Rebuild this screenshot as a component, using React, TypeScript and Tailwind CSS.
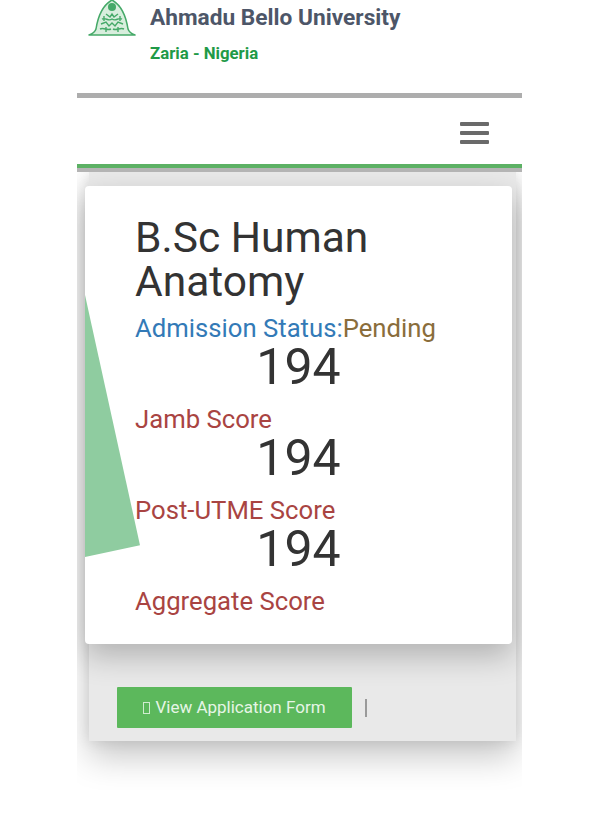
export default function App() {
  return (
    <div className="min-h-[826px] bg-white font-['Roboto',sans-serif] overflow-hidden">
      <div className="ml-[77px] w-[445px]">
        {/* header */}
        <div className="h-[98px] border-b-[5px] border-[#adadad] flex items-start pl-[11px]">
          <svg viewBox="0 0 48 38" className="w-[48px] h-[38px] mt-[-1px] shrink-0">
            <path d="M24 1 C33 6 38 17 40 30 C41 33 44 35 47 36 L1 36 C4 35 7 33 8 30 C10 17 15 6 24 1 Z" fill="#d8eedd" stroke="#45a968" strokeWidth="1.5" strokeLinejoin="round" />
            <circle cx="24" cy="8" r="4" fill="#45a968" />
            <path d="M18 15 L22 18 L24 15 L26 18 L30 15 M14 20 C18 18 20 23 24 20 C28 23 30 18 34 20 M13 25 L18 23 L21 27 L24 24 L27 27 L30 23 L35 25 M12 30 C16 28 19 32 23 30 M25 30 C29 32 32 28 36 30 M16 17 V22 M32 17 V22 M18 28 V33 M30 28 V33" fill="none" stroke="#45a968" strokeWidth="1.4" />
          </svg>
          <div className="ml-[14px]">
            <div className="text-[22.7px] leading-[25px] mt-[5px] font-bold text-[#4d5668]">Ahmadu Bello University</div>
            <div className="text-[16.8px] leading-[20px] mt-[13px] font-bold text-[#1f9a47]">Zaria - Nigeria</div>
          </div>
        </div>
        {/* nav */}
        <div className="h-[70px] border-b-[4px] border-[#5cb164] flex justify-end items-center pr-[33px] pt-[4px]">
          <div className="flex flex-col gap-[5px] w-[29px]">
            <div className="h-[4px] bg-[#6a6a6a] rounded-[1px]" />
            <div className="h-[4px] bg-[#6a6a6a] rounded-[1px]" />
            <div className="h-[4px] bg-[#6a6a6a] rounded-[1px]" />
          </div>
        </div>
        {/* content */}
        <div className="overflow-hidden h-[622px] pl-[12px] pr-[6px] border-t-[4px] border-[#b4b4b4]">
          <div className="h-[569px] bg-[#e9e9e9] pt-[14px] shadow-[0_16px_32px_rgba(0,0,0,0.22),0_0_14px_rgba(0,0,0,0.1)]">
            <div className="relative ml-[-4px] w-[427px] h-[458px] bg-white rounded-[4px] pl-[50px] pt-[30px] shadow-[0_12px_30px_rgba(0,0,0,0.24)]">
              <div className="absolute left-0 top-[109px] w-[55px] h-[262px] bg-[#8fcca0] [clip-path:polygon(0_0,100%_95.5%,0_100%)]" />
              <div className="relative">
                <h1 className="text-[42.5px] leading-[43.5px] text-[#333333]">B.Sc Human Anatomy</h1>
                <div className="text-[25.7px] leading-[30px] mt-[10px]">
                  <span className="text-[#337ab7]">Admission Status:</span>
                  <span className="text-[#8a6d3b]">Pending</span>
                </div>
                <div className="ml-[-50px] text-center text-[50px] leading-[48px] text-[#333333]">194</div>
                <div className="text-[25.7px] leading-[30px] mt-[13px] text-[#a94442]">Jamb Score</div>
                <div className="ml-[-50px] text-center text-[50px] leading-[48px] text-[#333333]">194</div>
                <div className="text-[25.7px] leading-[30px] mt-[13px] text-[#a94442]">Post-UTME Score</div>
                <div className="ml-[-50px] text-center text-[50px] leading-[48px] text-[#333333]">194</div>
                <div className="text-[25.7px] leading-[30px] mt-[13px] text-[#a94442]">Aggregate Score</div>
              </div>
            </div>
            <div className="flex items-center mt-[43px] pl-[28px]">
              <button className="w-[235px] h-[41px] bg-[#5cb85c] rounded-[1px] text-[17px] text-[#e6f5e6] flex items-center justify-center">
                <span className="inline-block w-[7px] h-[12px] border border-[#cfeccf] mr-[5px]" />
                View Application Form
              </button>
              <div className="ml-[13px] w-[2px] h-[18px] bg-[#9a9a9a]" />
            </div>
          </div>
        </div>
      </div>
    </div>
  )
}
